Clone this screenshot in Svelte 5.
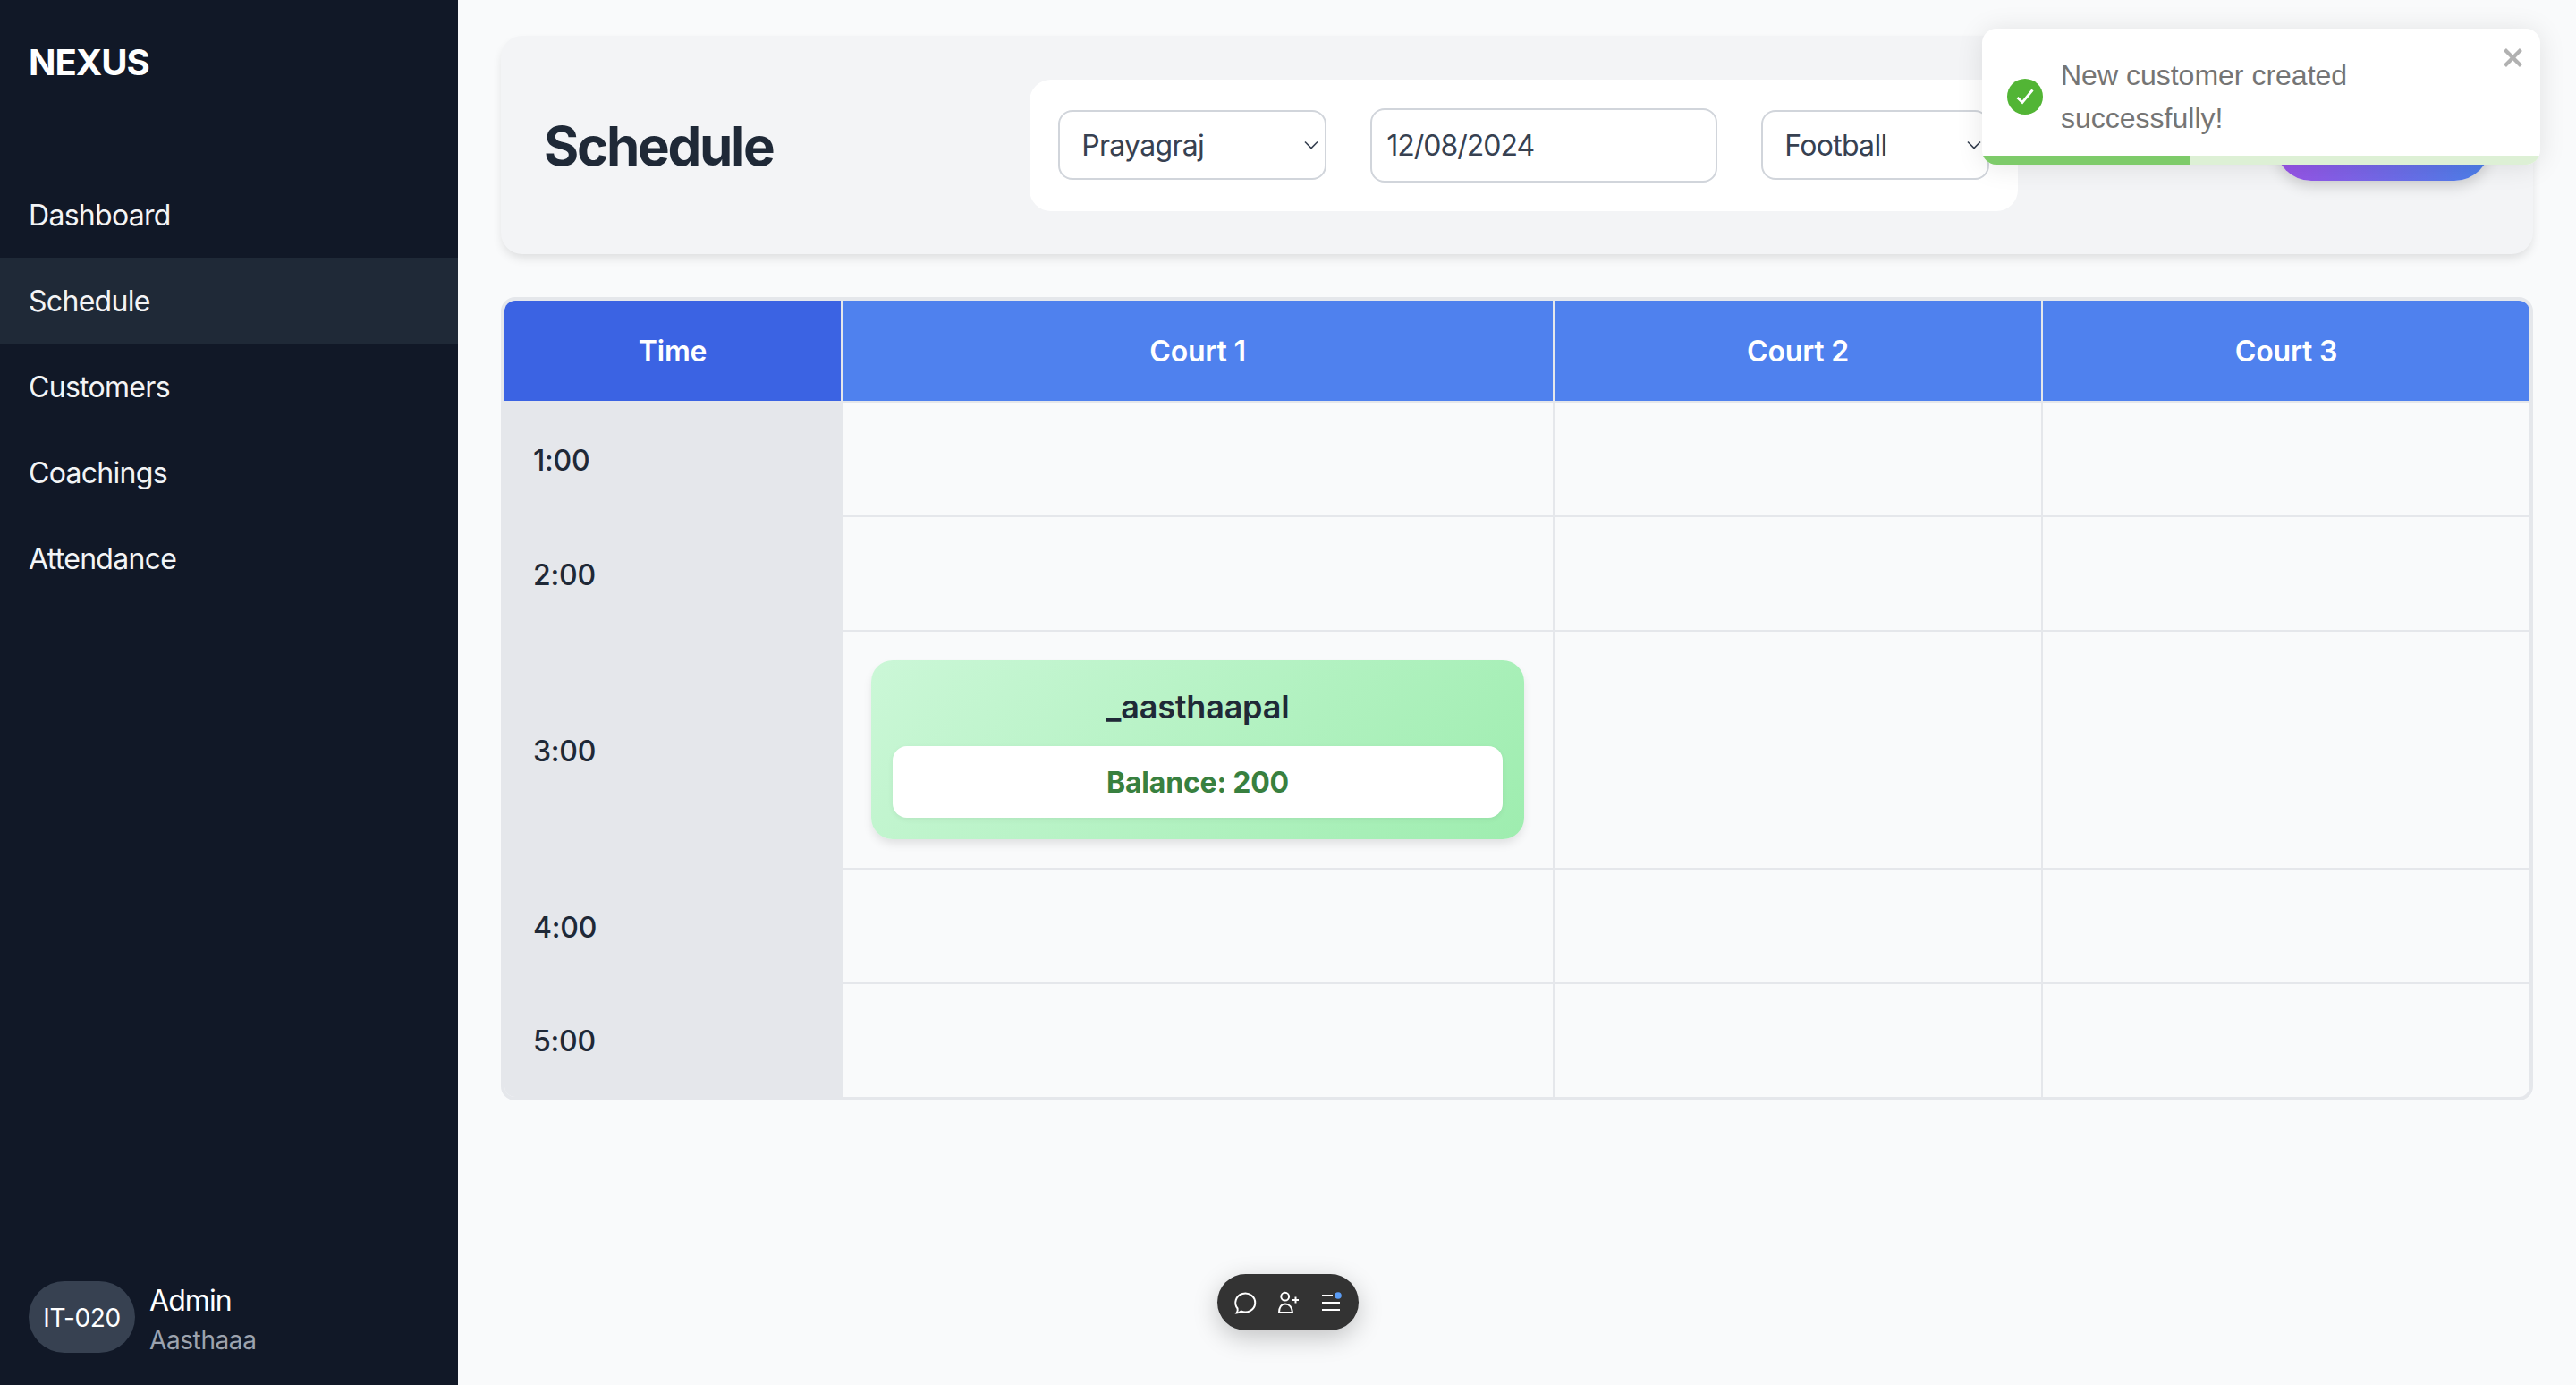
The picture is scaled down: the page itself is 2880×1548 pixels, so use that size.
<script>
  const navItems = ["Dashboard", "Schedule", "Customers", "Coachings", "Attendance"];
  const courts = ["Court 1", "Court 2", "Court 3"];
  const hours = ["1:00", "2:00", "3:00", "4:00", "5:00"];
  const chevron =
    "url(\"data:image/svg+xml,%3Csvg xmlns='http://www.w3.org/2000/svg' width='16' height='10'%3E%3Cpath d='M1 1.5l7 7 7-7' fill='none' stroke='%23374151' stroke-width='1.6'/%3E%3C/svg%3E\")";
</script>

<div class="layout" style="--chevron: {chevron}">
  <aside class="sidebar">
    <div class="brand">NEXUS</div>
    <nav class="nav">
      {#each navItems as item}
        <div class="nav-item" class:active={item === "Schedule"}>{item}</div>
      {/each}
    </nav>
    <div class="profile">
      <div class="avatar">IT-020</div>
      <div class="who">
        <div class="role">Admin</div>
        <div class="name">Aasthaaa</div>
      </div>
    </div>
  </aside>

  <main class="main">
    <header class="topbar">
      <h1>Schedule</h1>
      <div class="filters">
        <select class="select city">
          <option>Prayagraj</option>
        </select>
        <input class="date" type="text" value="12/08/2024" />
        <select class="select sport">
          <option>Football</option>
        </select>
      </div>
      <div class="action"></div>
    </header>

    <section class="table">
      <div class="th time-head">Time</div>
      {#each courts as court, i}
        <div class="th" class:end={i === 2}>{court}</div>
      {/each}

      {#each hours as hour, r}
        <div class="time" class:last={r === 4}>{hour}</div>
        {#each courts as court, i}
          <div class="cell" class:last={r === 4} class:end={i === 2}>
            {#if r === 2 && i === 0}
              <div class="booking">
                <div class="booking-name">_aasthaapal</div>
                <div class="balance">Balance: 200</div>
              </div>
            {/if}
          </div>
        {/each}
      {/each}
    </section>
  </main>

  <div class="toast">
    <div class="toast-body">
      <svg class="toast-icon" width="40" height="40" viewBox="0 0 40 40">
        <circle cx="20" cy="20" r="20" fill="#52b535" />
        <path d="M11.5 21l5.5 5.5L28.5 12.5" fill="none" stroke="#fff" stroke-width="2.8" />
      </svg>
      <div class="toast-text">New customer created successfully!</div>
      <svg class="toast-close" width="28" height="32" viewBox="0 0 14 16">
        <path
          d="M7.71 8.23l3.75 3.75-1.48 1.48-3.75-3.75-3.75 3.75L1 11.98l3.75-3.75L1 4.48 2.48 3l3.75 3.75L9.98 3l1.48 1.48-3.75 3.75z"
        />
      </svg>
    </div>
    <div class="toast-track"><div class="toast-fill"></div></div>
  </div>

  <div class="pill">
    <svg width="28" height="28" viewBox="0 0 28 28" fill="none" stroke="#fff" stroke-width="2">
      <path d="M4.5 25.5C5.5 24 6 22 5.6 20.5A11 10.5 0 1 1 9.5 23.5C8 24.5 6.5 25.5 4.5 25.5Z" />
    </svg>
    <svg width="28" height="28" viewBox="0 0 28 28" fill="none" stroke="#fff" stroke-width="2">
      <circle cx="10.7" cy="7.2" r="4.4" />
      <path d="M4 25C4 19.5 6.5 15.5 11 15.5C15.5 15.5 18.5 19.5 19 25Z" />
      <path d="M19 11H26M22.5 7.5V14.5" />
    </svg>
    <svg width="28" height="28" viewBox="0 0 28 28" fill="none" stroke="#fff" stroke-width="2">
      <path d="M4 6H16M4 14H24M4 22H24" />
      <circle cx="22" cy="6" r="3.8" fill="#5a9cf5" stroke="none" />
    </svg>
  </div>
</div>

<style>
  :global(body) {
    margin: 0;
    background: #f9fafb;
  }
  .layout {
    display: flex;
    height: 1548px;
    font-family: Inter, "Noto Sans", sans-serif;
    color: #1f2937;
    overflow: hidden;
    box-sizing: border-box;
  }

  .sidebar {
    width: 512px;
    flex: none;
    display: flex;
    flex-direction: column;
    background: #111827;
    color: #fff;
  }
  .brand {
    padding: 40px 32px 92px;
    height: 60px;
    line-height: 60px;
    font-size: 40px;
    font-weight: 700;
    letter-spacing: -1px;
  }
  .nav {
    flex: 1;
  }
  .nav-item {
    height: 96px;
    line-height: 98px;
    padding-left: 32px;
    font-size: 32px;
    letter-spacing: -0.7px;
    color: #f3f4f6;
  }
  .nav-item.active {
    background: #1f2937;
  }
  .profile {
    display: flex;
    align-items: flex-start;
    gap: 16px;
    padding: 0 32px 30px;
  }
  .avatar {
    width: 119px;
    height: 80px;
    margin-top: 2px;
    padding-top: 2px;
    box-sizing: border-box;
    border-radius: 40px;
    background: #374151;
    display: flex;
    align-items: center;
    justify-content: center;
    font-size: 28px;
    letter-spacing: -0.4px;
  }
  .role {
    font-size: 32px;
    line-height: 48px;
    letter-spacing: -0.9px;
  }
  .name {
    font-size: 28px;
    line-height: 40px;
    letter-spacing: -0.4px;
    color: #9ca3af;
  }

  .main {
    flex: 1;
    padding: 40px 48px;
    min-width: 0;
  }
  .topbar {
    display: flex;
    align-items: center;
    justify-content: space-between;
    height: 244px;
    box-sizing: border-box;
    padding: 0 48px;
    background: #f3f4f6;
    border-radius: 24px;
    box-shadow: 0 6px 12px -2px rgba(0, 0, 0, 0.12);
  }
  h1 {
    margin: 0;
    padding-top: 2px;
    font-size: 60px;
    font-weight: 700;
    color: #1f2937;
    letter-spacing: -2.3px;
  }
  .filters {
    display: flex;
    align-items: center;
    gap: 49px;
    padding: 32px;
    margin-right: 1px;
    background: #fff;
    border-radius: 24px;
  }
  .select,
  .date {
    box-sizing: border-box;
    border: 2px solid #d1d5db;
    border-radius: 16px;
    background-color: #fff;
    color: #374151;
    font-family: inherit;
    font-size: 32px;
    letter-spacing: -0.7px;
    outline: none;
  }
  .select {
    appearance: none;
    height: 78px;
    padding: 0 24px;
    background-image: var(--chevron);
    background-repeat: no-repeat;
    background-position: right 7px center;
  }
  .city {
    width: 300px;
  }
  .sport {
    width: 255px;
  }
  .date {
    width: 388px;
    height: 83px;
    padding: 0 16px;
    letter-spacing: -1px;
  }
  .action {
    width: 240px;
    height: 80px;
    border-radius: 40px;
    background: linear-gradient(to right, #9a52e6, #4a80ea);
    box-shadow: 0 8px 16px -2px rgba(0, 0, 0, 0.16);
  }

  .table {
    margin-top: 48px;
    display: grid;
    grid-template-columns: 378px 796px 546px 1fr;
    border: 4px solid #e5e7eb;
    border-radius: 16px;
    background: #f9fafb;
    overflow: hidden;
  }
  .th {
    height: 114px;
    box-sizing: border-box;
    display: flex;
    align-items: center;
    justify-content: center;
    background: #4f81ee;
    color: #fff;
    font-size: 32px;
    font-weight: 600;
    letter-spacing: -0.2px;
    border-right: 2px solid #e5e7eb;
    border-bottom: 2px solid #e5e7eb;
  }
  .th.end,
  .cell.end {
    border-right: none;
  }
  .th.time-head {
    background: #3b63e3;
  }
  .time {
    min-height: 128px;
    box-sizing: border-box;
    display: flex;
    align-items: center;
    padding-left: 32px;
    background: #e5e7eb;
    font-size: 32px;
    font-weight: 500;
    letter-spacing: -0.2px;
  }
  .cell {
    min-height: 128px;
    box-sizing: border-box;
    padding: 32px;
    border-right: 2px solid #e5e7eb;
    border-bottom: 2px solid #e5e7eb;
  }
  .time.last,
  .cell.last {
    min-height: 126px;
    padding-bottom: 0;
    border-bottom: none;
  }
  .booking {
    height: 200px;
    box-sizing: border-box;
    padding: 24px;
    border-radius: 24px;
    background: linear-gradient(135deg, #cbf7d7, #9eedaf);
    box-shadow: 0 6px 12px -2px rgba(0, 0, 0, 0.12);
    text-align: center;
  }
  .booking-name {
    height: 56px;
    line-height: 56px;
    margin-bottom: 16px;
    font-size: 36px;
    font-weight: 600;
    letter-spacing: -0.2px;
  }
  .balance {
    height: 80px;
    line-height: 81px;
    border-radius: 16px;
    background: #fff;
    color: #38803f;
    font-size: 32px;
    font-weight: 700;
    letter-spacing: -0.2px;
    box-shadow: 0 2px 6px rgba(0, 0, 0, 0.06);
  }

  .toast {
    position: absolute;
    top: 32px;
    left: 2216px;
    width: 624px;
    height: 152px;
    display: flex;
    flex-direction: column;
    background: #fff;
    border-radius: 16px;
    overflow: hidden;
    box-shadow: 0 2px 30px rgba(0, 0, 0, 0.1);
    font-family: "Liberation Sans", sans-serif;
  }
  .toast-body {
    flex: 1;
    display: flex;
    align-items: center;
    padding: 10px 15px 0 28px;
  }
  .toast-icon {
    flex: none;
    margin-right: 20px;
  }
  .toast-text {
    flex: 1;
    width: 0;
    padding-right: 60px;
    font-size: 32px;
    line-height: 48px;
    color: #757575;
  }
  .toast-close {
    flex: none;
    align-self: flex-start;
    margin-top: 6px;
    fill: #000;
    opacity: 0.3;
  }
  .toast-track {
    height: 10px;
    background: #ddf0d5;
  }
  .toast-fill {
    width: 233px;
    height: 100%;
    background: #7ecb6a;
  }

  .pill {
    position: absolute;
    top: 1424px;
    left: 1361px;
    width: 158px;
    height: 63px;
    box-sizing: border-box;
    display: flex;
    align-items: center;
    justify-content: space-between;
    padding: 0 17px;
    border-radius: 32px;
    background: #333;
    box-shadow: 0 8px 28px rgba(0, 0, 0, 0.22);
  }
</style>
